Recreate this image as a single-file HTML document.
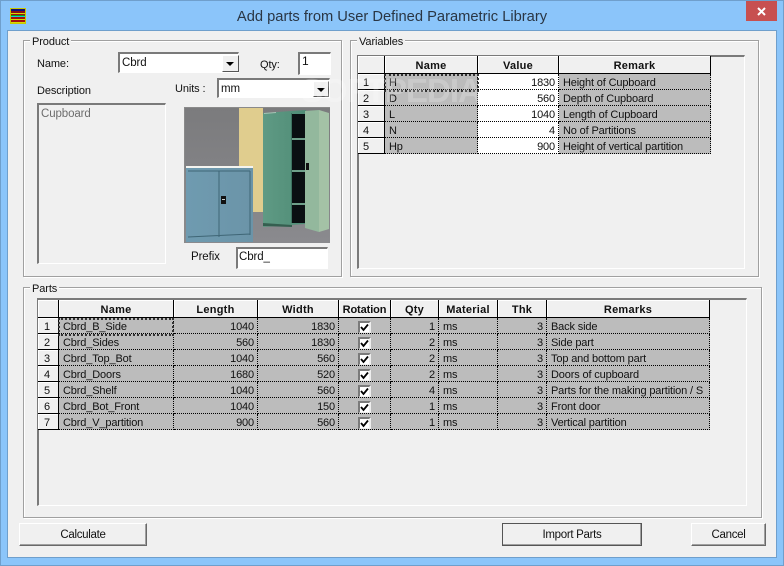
<!DOCTYPE html>
<html><head><meta charset="utf-8"><style>
*{box-sizing:border-box}
html,body{margin:0;padding:0;background:#8bc5fa}
#w{position:relative;width:784px;height:566px;overflow:hidden;background:#8bc5fa;font:11px "Liberation Sans",Arial,sans-serif;letter-spacing:-.1px;color:#111;border:1px solid #6f9fcc}
.a{position:absolute;white-space:nowrap}
.grp{border:1px solid #a0a0a0;box-shadow:inset 1px 1px 0 #fff,1px 1px 0 #fff}
.lg{background:#f0f0f0;padding:0 2px;line-height:12px;height:12px}
.sunk{background:#fff;border:solid;border-width:2px 1px 1px 2px;border-color:#7a7a7a #fff #fff #7a7a7a}
.arrow{background:#f0f0f0;border:1px solid;border-color:#fff #555 #555 #fff}
.arrow:after{content:"";position:absolute;left:3px;top:6px;border:4px solid transparent;border-top:4px solid #000;border-bottom:0}
.btn{background:#f0f0f0;border:1px solid;border-color:#fff #696969 #696969 #fff;box-shadow:inset -1px -1px 0 #a0a0a0;text-align:center;font-size:11.5px;letter-spacing:-.3px}
table{position:absolute;border-collapse:separate;border-spacing:0;table-layout:fixed;font:11px "Liberation Sans",Arial,sans-serif;letter-spacing:-.15px}
th{height:18px;background:#f0f0f0;font-weight:bold;letter-spacing:.25px;border-right:1px solid #000;border-bottom:1px solid #000;padding:2px 0 0;box-shadow:inset 1px 1px 0 #fff}
td{height:16px;line-height:12px;background:#bcbcbc;border-right:1px dotted #000;border-bottom:1px dotted #000;padding:2px 3px 0 4px;overflow:hidden;white-space:nowrap}
td.n{background:#f0f0f0;border-right:1px solid #000;border-bottom:1px solid #000;padding:2px 0 0 6px;box-shadow:inset 1px 1px 0 #fff}
.v td.n{padding-left:5px}
td.r{text-align:right}
td.wh{background:#fff}
td.c{padding:0;position:relative}
.cb{position:absolute;left:19px;top:3px;width:13px;height:13px;background:#fff;border:2px solid;border-color:#7a7a7a #eee #eee #7a7a7a}
.cb svg{position:absolute;left:0;top:0}
</style></head><body><div id="w">

<svg class="a" style="left:9px;top:7px" width="16" height="16" viewBox="0 0 16 16">
<rect width="16" height="16" fill="#c8c800"/>
<rect x="1" y="1" width="14" height="2" fill="#10107a"/>
<rect x="1" y="3" width="14" height="2" fill="#8a1010"/>
<rect x="1" y="5" width="14" height="1" fill="#d8d800"/>
<rect x="1" y="6" width="14" height="1" fill="#a01010"/>
<rect x="1" y="7" width="14" height="1" fill="#0b9a10"/>
<rect x="1" y="8" width="14" height="1" fill="#10d0d0"/>
<rect x="1" y="9" width="14" height="2" fill="#a01010"/>
<rect x="1" y="11" width="14" height="1" fill="#d8d800"/>
<rect x="1" y="12" width="14" height="2" fill="#a01010"/>
<rect x="1" y="14" width="14" height="1" fill="#d8d800"/>
</svg>
<div class="a" style="left:0;top:8px;width:782px;text-align:center;font-size:14.700px;line-height:17px;letter-spacing:0;color:#2a3644">Add parts from User Defined Parametric Library</div>
<div class="a" style="left:745px;top:0;width:31px;height:20px;background:#c75050"></div>
<svg class="a" style="left:745px;top:0" width="31" height="20"><path d="M12 7L19 14M19 7L12 14" stroke="#fff" stroke-width="2" fill="none"/></svg>

<div class="a" style="left:6px;top:29px;width:770px;height:528px;background:#f0f0f0;border:1px solid #6f9fcc"></div>

<!-- Product -->
<div class="a grp" style="left:22px;top:39px;width:319px;height:237px"></div>
<div class="a lg" style="left:29px;top:35px">Product</div>
<div class="a" style="left:36px;top:57px">Name:</div>
<div class="a sunk" style="left:117px;top:51px;width:121px;height:21px;padding:3px 2px;line-height:13px;font-size:11.500px">Cbrd<div class="a arrow" style="left:102px;top:1px;width:17px;height:17px"></div></div>
<div class="a" style="left:259px;top:58px">Qty:</div>
<div class="a sunk" style="left:297px;top:51px;width:33px;height:23px;padding:0 2px;line-height:15px;font-size:12px">1</div>
<div class="a" style="left:36px;top:84px">Description</div>
<div class="a" style="left:174px;top:82px">Units :</div>
<div class="a sunk" style="left:216px;top:77px;width:113px;height:20px;padding:3px 2px;line-height:13px;font-size:11.500px">mm<div class="a arrow" style="left:94px;top:1px;width:16px;height:16px"></div></div>
<div class="a sunk" style="left:36px;top:102px;width:129px;height:161px;background:#f0f0f0;color:#6d6d6d;padding:3px 2px;line-height:13px;font-size:11.500px">Cupboard</div>

<svg class="a" style="left:183px;top:106px" width="147" height="137" viewBox="0 0 147 137">
<defs>
<linearGradient id="f" x1="0" y1="0" x2="0" y2="1"><stop offset="0" stop-color="#7b7b7d"/><stop offset="1" stop-color="#8a8a8e"/></linearGradient>
<linearGradient id="g" x1="0" y1="0" x2="1" y2="0"><stop offset="0" stop-color="#5f9a84"/><stop offset="1" stop-color="#4f8c76"/></linearGradient>
<linearGradient id="b" x1="0" y1="0" x2="1" y2="0"><stop offset="0" stop-color="#6f9bb0"/><stop offset="1" stop-color="#6b94a8"/></linearGradient>
</defs>
<rect width="147" height="137" fill="#f0f0f0"/>
<rect x="1" y="1" width="145" height="135" fill="url(#f)"/>
<rect x="0" y="0" width="146" height="1" fill="#8a8a8a"/>
<rect x="0" y="0" width="1" height="136" fill="#8a8a8a"/>
<path d="M55 1H79V105H55Z" fill="#e0cd8e"/>
<path d="M79 6L122 3L121 117L79 120Z" fill="url(#g)"/>
<path d="M80 6L92 5V6L80 7Z" fill="#a8c4b6"/>
<rect x="108" y="7" width="13" height="109" fill="#0a0f12"/>
<path d="M108 31H121V33H108ZM108 63H121V65H108ZM108 96H121V98H108Z" fill="#6fa08a"/>
<path d="M107 6H108V116H107Z" fill="#3d7361"/>
<path d="M121 4L135 3V125L121 121Z" fill="#93b89d"/>
<path d="M135 3L145 6V122L135 125Z" fill="#a4c2a6"/>
<rect x="122" y="56" width="3" height="7" fill="#111"/>
<path d="M79 116L108 118V120L79 119Z" fill="#355f50"/>
<path d="M2 60L69 60V135L2 135Z" fill="url(#b)"/>
<path d="M2 59H69V61H2Z" fill="#f4f4f0"/>
<path d="M4 64H66M35 64V130M66 64V128M4 130L66 127" stroke="#3f6676" stroke-width="1" fill="none"/>
<rect x="37" y="89" width="5" height="8" fill="#111"/>
<rect x="38" y="92" width="3" height="1" fill="#ccc"/>
</svg>

<div class="a" style="left:190px;top:250px;font-size:11.500px">Prefix</div>
<div class="a sunk" style="left:235px;top:246px;width:92px;height:22px;padding:1px 1px;line-height:15px;font-size:11.500px">Cbrd_</div>

<!-- Variables -->
<div class="a grp" style="left:349px;top:39px;width:409px;height:237px"></div>
<div class="a lg" style="left:356px;top:35px">Variables</div>
<div class="a" style="left:356px;top:54px;width:388px;height:214px;border:solid;border-width:2px 1px 1px 2px;border-color:#7a7a7a #fff #fff #7a7a7a"></div>
<table class="v" style="left:357px;top:55px;width:353px">
<colgroup><col style="width:27px"><col style="width:93px"><col style="width:81px"><col style="width:152px"></colgroup>
<tr><th></th><th>Name</th><th>Value</th><th>Remark</th></tr>
<tr><td class="n">1</td><td>H</td><td class="r wh">1830</td><td>Height of Cupboard</td></tr>
<tr><td class="n">2</td><td>D</td><td class="r wh">560</td><td>Depth of Cupboard</td></tr>
<tr><td class="n">3</td><td>L</td><td class="r wh">1040</td><td>Length of Cupboard</td></tr>
<tr><td class="n">4</td><td>N</td><td class="r wh">4</td><td>No of Partitions</td></tr>
<tr><td class="n">5</td><td>Hp</td><td class="r wh">900</td><td>Height of vertical partition</td></tr>
</table>
<div class="a" style="left:383px;top:73px;width:95px;height:18px;border:2px dotted #333"></div>

<!-- Parts -->
<div class="a grp" style="left:22px;top:286px;width:739px;height:231px"></div>
<div class="a lg" style="left:29px;top:282px">Parts</div>
<div class="a" style="left:36px;top:297px;width:710px;height:208px;border:solid;border-width:2px 1px 1px 2px;border-color:#7a7a7a #fff #fff #7a7a7a"></div>
<table style="left:37px;top:299px;width:672px">
<colgroup><col style="width:21px"><col style="width:115px"><col style="width:84px"><col style="width:81px"><col style="width:52px"><col style="width:48px"><col style="width:59px"><col style="width:49px"><col style="width:163px"></colgroup>
<tr><th></th><th>Name</th><th>Length</th><th>Width</th><th style="letter-spacing:-.1px">Rotation</th><th>Qty</th><th>Material</th><th>Thk</th><th>Remarks</th></tr>
<tr><td class="n">1</td><td>Cbrd_B_Side</td><td class="r">1040</td><td class="r">1830</td><td class="c"><div class="cb"><svg width="9" height="9"><path d="M1 4L3.500 7L8 1.500" stroke="#000" stroke-width="1.800" fill="none"/></svg></div></td><td class="r">1</td><td>ms</td><td class="r">3</td><td>Back side</td></tr>
<tr><td class="n">2</td><td>Cbrd_Sides</td><td class="r">560</td><td class="r">1830</td><td class="c"><div class="cb"><svg width="9" height="9"><path d="M1 4L3.500 7L8 1.500" stroke="#000" stroke-width="1.800" fill="none"/></svg></div></td><td class="r">2</td><td>ms</td><td class="r">3</td><td>Side part</td></tr>
<tr><td class="n">3</td><td>Cbrd_Top_Bot</td><td class="r">1040</td><td class="r">560</td><td class="c"><div class="cb"><svg width="9" height="9"><path d="M1 4L3.500 7L8 1.500" stroke="#000" stroke-width="1.800" fill="none"/></svg></div></td><td class="r">2</td><td>ms</td><td class="r">3</td><td>Top and bottom part</td></tr>
<tr><td class="n">4</td><td>Cbrd_Doors</td><td class="r">1680</td><td class="r">520</td><td class="c"><div class="cb"><svg width="9" height="9"><path d="M1 4L3.500 7L8 1.500" stroke="#000" stroke-width="1.800" fill="none"/></svg></div></td><td class="r">2</td><td>ms</td><td class="r">3</td><td>Doors of cupboard</td></tr>
<tr><td class="n">5</td><td>Cbrd_Shelf</td><td class="r">1040</td><td class="r">560</td><td class="c"><div class="cb"><svg width="9" height="9"><path d="M1 4L3.500 7L8 1.500" stroke="#000" stroke-width="1.800" fill="none"/></svg></div></td><td class="r">4</td><td>ms</td><td class="r">3</td><td>Parts for the making partition / S</td></tr>
<tr><td class="n">6</td><td>Cbrd_Bot_Front</td><td class="r">1040</td><td class="r">150</td><td class="c"><div class="cb"><svg width="9" height="9"><path d="M1 4L3.500 7L8 1.500" stroke="#000" stroke-width="1.800" fill="none"/></svg></div></td><td class="r">1</td><td>ms</td><td class="r">3</td><td>Front door</td></tr>
<tr><td class="n">7</td><td>Cbrd_V_partition</td><td class="r">900</td><td class="r">560</td><td class="c"><div class="cb"><svg width="9" height="9"><path d="M1 4L3.500 7L8 1.500" stroke="#000" stroke-width="1.800" fill="none"/></svg></div></td><td class="r">1</td><td>ms</td><td class="r">3</td><td>Vertical partition</td></tr>
</table>
<div class="a" style="left:57px;top:317px;width:116px;height:18px;border:2px dotted #333"></div>

<!-- Buttons -->
<div class="a btn" style="left:18px;top:522px;width:128px;height:23px;line-height:23px">Calculate</div>
<div class="a btn" style="left:501px;top:522px;width:140px;height:23px;line-height:23px;outline:1px solid #555;outline-offset:-1px">Import Parts</div>
<div class="a btn" style="left:690px;top:522px;width:75px;height:23px;line-height:23px">Cancel</div>

<!-- Watermark -->
<div class="a" style="left:300px;top:70px;font:bold 33px/40px 'Liberation Sans',sans-serif;color:rgba(255,255,255,.22);letter-spacing:-1px">SOFTPEDIA</div>
</div></body></html>
